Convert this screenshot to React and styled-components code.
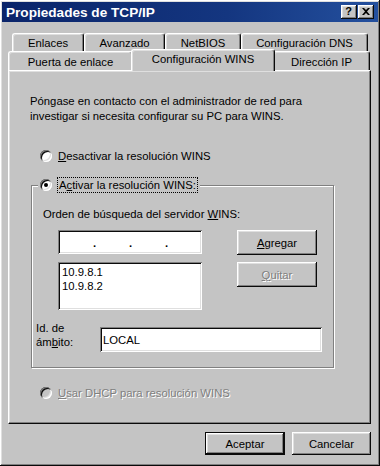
import React from 'react';
import styled, { createGlobalStyle, css } from 'styled-components';

const FACE = '#c4c4c4';

const GlobalStyle = createGlobalStyle`
  html, body {
    margin: 0;
    padding: 0;
    background: ${FACE};
  }
  body {
    font-family: "Liberation Sans", Arial, sans-serif;
    font-size: 11.3px;
    color: #000;
  }
`;

const raised = css`
  box-shadow: inset -1px -1px #0a0a0a, inset 1px 1px #ffffff,
    inset -2px -2px #808080, inset 2px 2px #dfdfdf;
`;

const sunken = css`
  box-shadow: inset 1px 1px #808080, inset -1px -1px #ffffff,
    inset 2px 2px #0a0a0a, inset -2px -2px #dfdfdf;
`;

const Window = styled.div`
  width: 380px;
  height: 466px;
  box-sizing: border-box;
  padding: 2px;
  background: ${FACE};
  ${raised};
  display: flex;
  flex-direction: column;
`;

const TitleBar = styled.div`
  height: 20px;
  display: flex;
  align-items: center;
  padding: 0 4px 0 4px;
  background: linear-gradient(90deg, #0a246a 0%, #143680 60%, #24509e 100%);
`;

const Title = styled.span`
  flex: 1;
  color: #fff;
  font-weight: bold;
  font-size: 13.6px;
`;

const TitleButtons = styled.div`
  display: flex;
  gap: 1px;
`;

const TitleButton = styled.div`
  width: 16px;
  height: 14px;
  box-sizing: border-box;
  background: ${FACE};
  ${raised};
  display: flex;
  align-items: center;
  justify-content: center;
  font-weight: bold;
  font-size: 11px;
  line-height: 1;
  padding: 0 1px 1px 0;
`;

const Body = styled.div`
  flex: 1;
  display: flex;
  flex-direction: column;
  padding: 11px 5px 0 6px;
`;

const TabRow = styled.div`
  display: flex;
  height: ${p => p.$h}px;
  margin: 0 ${p => p.$right}px 0 ${p => p.$left}px;
`;

const Tab = styled.div`
  width: ${p => p.$w}px;
  height: 100%;
  box-sizing: border-box;
  display: flex;
  align-items: center;
  justify-content: center;
  background: ${FACE};
  border-top: 1px solid #fff;
  border-left: 1px solid #fff;
  border-right: 1px solid #0a0a0a;
  border-top-left-radius: 3px;
  border-top-right-radius: 3px;
  box-shadow: inset -1px 0 #808080, inset 1px 1px #dfdfdf;
  padding-top: 1px;
  white-space: nowrap;

  ${p => p.$selected && css`
    position: relative;
    z-index: 1;
    width: ${p.$w + 4}px;
    height: calc(100% + 3px);
    margin: -2px -2px -1px;
    padding: 0 0 3px;
  `}
`;

const Panel = styled.div`
  height: 354px;
  box-sizing: border-box;
  margin-right: 2px;
  display: flex;
  flex-direction: column;
  border-top: 1px solid #fff;
  border-left: 1px solid #fff;
  border-right: 1px solid #0a0a0a;
  border-bottom: 1px solid #0a0a0a;
  box-shadow: inset -1px -1px #808080, inset 1px 1px #dfdfdf;
`;

const Intro = styled.p`
  margin: 23px 0 0 21px;
  line-height: 15px;
`;

const RadioRow = styled.label`
  display: flex;
  align-items: center;
  gap: 6px;
  height: 16px;
  margin: ${p => p.$mt || 0}px 0 0 ${p => p.$ml || 0}px;
  color: ${p => (p.$disabled ? '#808080' : '#000')};
  text-shadow: ${p => (p.$disabled ? '1px 1px #fff' : 'none')};
  white-space: nowrap;
`;

const Radio = styled.span`
  width: 12px;
  height: 12px;
  flex: none;
  border-radius: 50%;
  position: relative;
  background: ${p => (p.$disabled ? FACE : '#fff')};
  box-shadow: inset 1px 1px #808080, inset -1px -1px #ffffff,
    inset 2px 2px #0a0a0a, inset -2px -2px #dfdfdf;

  &::after {
    content: '';
    display: ${p => (p.$checked ? 'block' : 'none')};
    position: absolute;
    left: 4px;
    top: 4px;
    width: 4px;
    height: 4px;
    border-radius: 50%;
    background: #000;
  }
`;

const Focus = styled.span`
  outline: 1px dotted #000;
  padding: 0 1px;
  line-height: 14px;
`;

const Group = styled.fieldset`
  margin: 13px 0 0 22px;
  width: 303px;
  box-sizing: border-box;
  padding: 0 0 15px;
  min-width: 0;
  border: 1px solid #808080;
  box-shadow: inset 1px 1px #fff, 1px 1px #fff;
`;

const Legend = styled.legend`
  margin-left: 6px;
  padding: 0 3px 0 2px;
  background: ${FACE};
`;

const Label = styled.div`
  margin: 14px 0 0 11px;
  line-height: 15px;
`;

const ServerGrid = styled.div`
  display: grid;
  grid-template-columns: 144px 80px;
  column-gap: 35px;
  row-gap: 7px;
  align-items: start;
  margin: 8px 0 0 26px;
`;

const IpField = styled.div`
  height: 24px;
  box-sizing: border-box;
  background: #fff;
  ${sunken};
  display: grid;
  grid-template-columns: 33px 3px 33px 3px 33px 3px 33px;
  align-items: center;
  padding: 0 2px;
`;

const IpDot = styled.span`
  font-weight: bold;
  text-align: center;
  line-height: 1;
  padding-top: 3px;
`;

const ListBox = styled.div`
  height: 48px;
  box-sizing: border-box;
  background: #fff;
  ${sunken};
  padding: 3px 4px;
  line-height: 14px;
`;

const Button = styled.div`
  width: ${p => p.$w || 80}px;
  height: ${p => p.$h || 25}px;
  box-sizing: border-box;
  background: ${FACE};
  display: flex;
  align-items: center;
  justify-content: center;
  ${raised};
  color: ${p => (p.$disabled ? '#808080' : '#000')};
  text-shadow: ${p => (p.$disabled ? '1px 1px #fff' : 'none')};

  ${p => p.$default && css`
    border: 1px solid #0a0a0a;
  `}
`;

const ScopeRow = styled.div`
  display: flex;
  align-items: flex-start;
  margin: 11px 0 0 4px;
`;

const ScopeLabel = styled.div`
  width: 64px;
  line-height: 14px;
`;

const TextField = styled.div`
  width: 222px;
  height: 25px;
  box-sizing: border-box;
  margin-top: 6px;
  background: #fff;
  ${sunken};
  display: flex;
  align-items: center;
  padding: 0 4px 0 3px;
`;

const Footer = styled.div`
  display: flex;
  justify-content: flex-end;
  gap: 7px;
  margin: 8px 2px 0 0;
`;

const CloseIcon = () => (
  <svg width="8" height="7" viewBox="0 0 8 7">
    <path d="M0 0h2l2 2 2-2h2L5 3.5 8 7H6L4 5 2 7H0l3-3.5z" fill="#000" />
  </svg>
);

const topTabs = [
  { label: 'Enlaces', w: 72 },
  { label: 'Avanzado', w: 81 },
  { label: 'NetBIOS', w: 76 },
  { label: 'Configuración DNS', w: 127 },
];

const bottomTabs = [
  { label: 'Puerta de enlace', w: 125 },
  { label: 'Configuración WINS', w: 140, selected: true },
  { label: 'Dirección IP', w: 97 },
];

export default function App() {
  return (
    <>
      <GlobalStyle />
      <Window>
        <TitleBar>
          <Title>Propiedades de TCP/IP</Title>
          <TitleButtons>
            <TitleButton>?</TitleButton>
            <TitleButton><CloseIcon /></TitleButton>
          </TitleButtons>
        </TitleBar>

        <Body>
          <TabRow $h={18} $left={4} $right={5}>
            {topTabs.map(t => (
              <Tab key={t.label} $w={t.w}>{t.label}</Tab>
            ))}
          </TabRow>
          <TabRow $h={19} $left={0} $right={3}>
            {bottomTabs.map(t => (
              <Tab key={t.label} $w={t.w} $selected={t.selected}>{t.label}</Tab>
            ))}
          </TabRow>

          <Panel>
            <Intro>
              Póngase en contacto con el administrador de red para
              <br />
              investigar si necesita configurar su PC para WINS.
            </Intro>

            <RadioRow $mt={24} $ml={31}>
              <Radio />
              <span><u>D</u>esactivar la resolución WINS</span>
            </RadioRow>

            <Group>
              <Legend>
                <RadioRow>
                  <Radio $checked />
                  <Focus>A<u>c</u>tivar la resolución WINS:</Focus>
                </RadioRow>
              </Legend>

              <Label>Orden de búsqueda del servidor <u>W</u>INS:</Label>

              <ServerGrid>
                <IpField>
                  <span />
                  <IpDot>.</IpDot>
                  <span />
                  <IpDot>.</IpDot>
                  <span />
                  <IpDot>.</IpDot>
                  <span />
                </IpField>
                <Button><span><u>A</u>gregar</span></Button>
                <ListBox>
                  <div>10.9.8.1</div>
                  <div>10.9.8.2</div>
                </ListBox>
                <Button $disabled><span><u>Q</u>uitar</span></Button>
              </ServerGrid>

              <ScopeRow>
                <ScopeLabel>
                  Id. de
                  <br />
                  ám<u>b</u>ito:
                </ScopeLabel>
                <TextField>LOCAL</TextField>
              </ScopeRow>
            </Group>

            <RadioRow $mt={17} $ml={31} $disabled>
              <Radio $disabled />
              <span><u>U</u>sar DHCP para resolución WINS</span>
            </RadioRow>
          </Panel>

          <Footer>
            <Button $w={80} $h={23} $default>Aceptar</Button>
            <Button $w={79} $h={23}>Cancelar</Button>
          </Footer>
        </Body>
      </Window>
    </>
  );
}
